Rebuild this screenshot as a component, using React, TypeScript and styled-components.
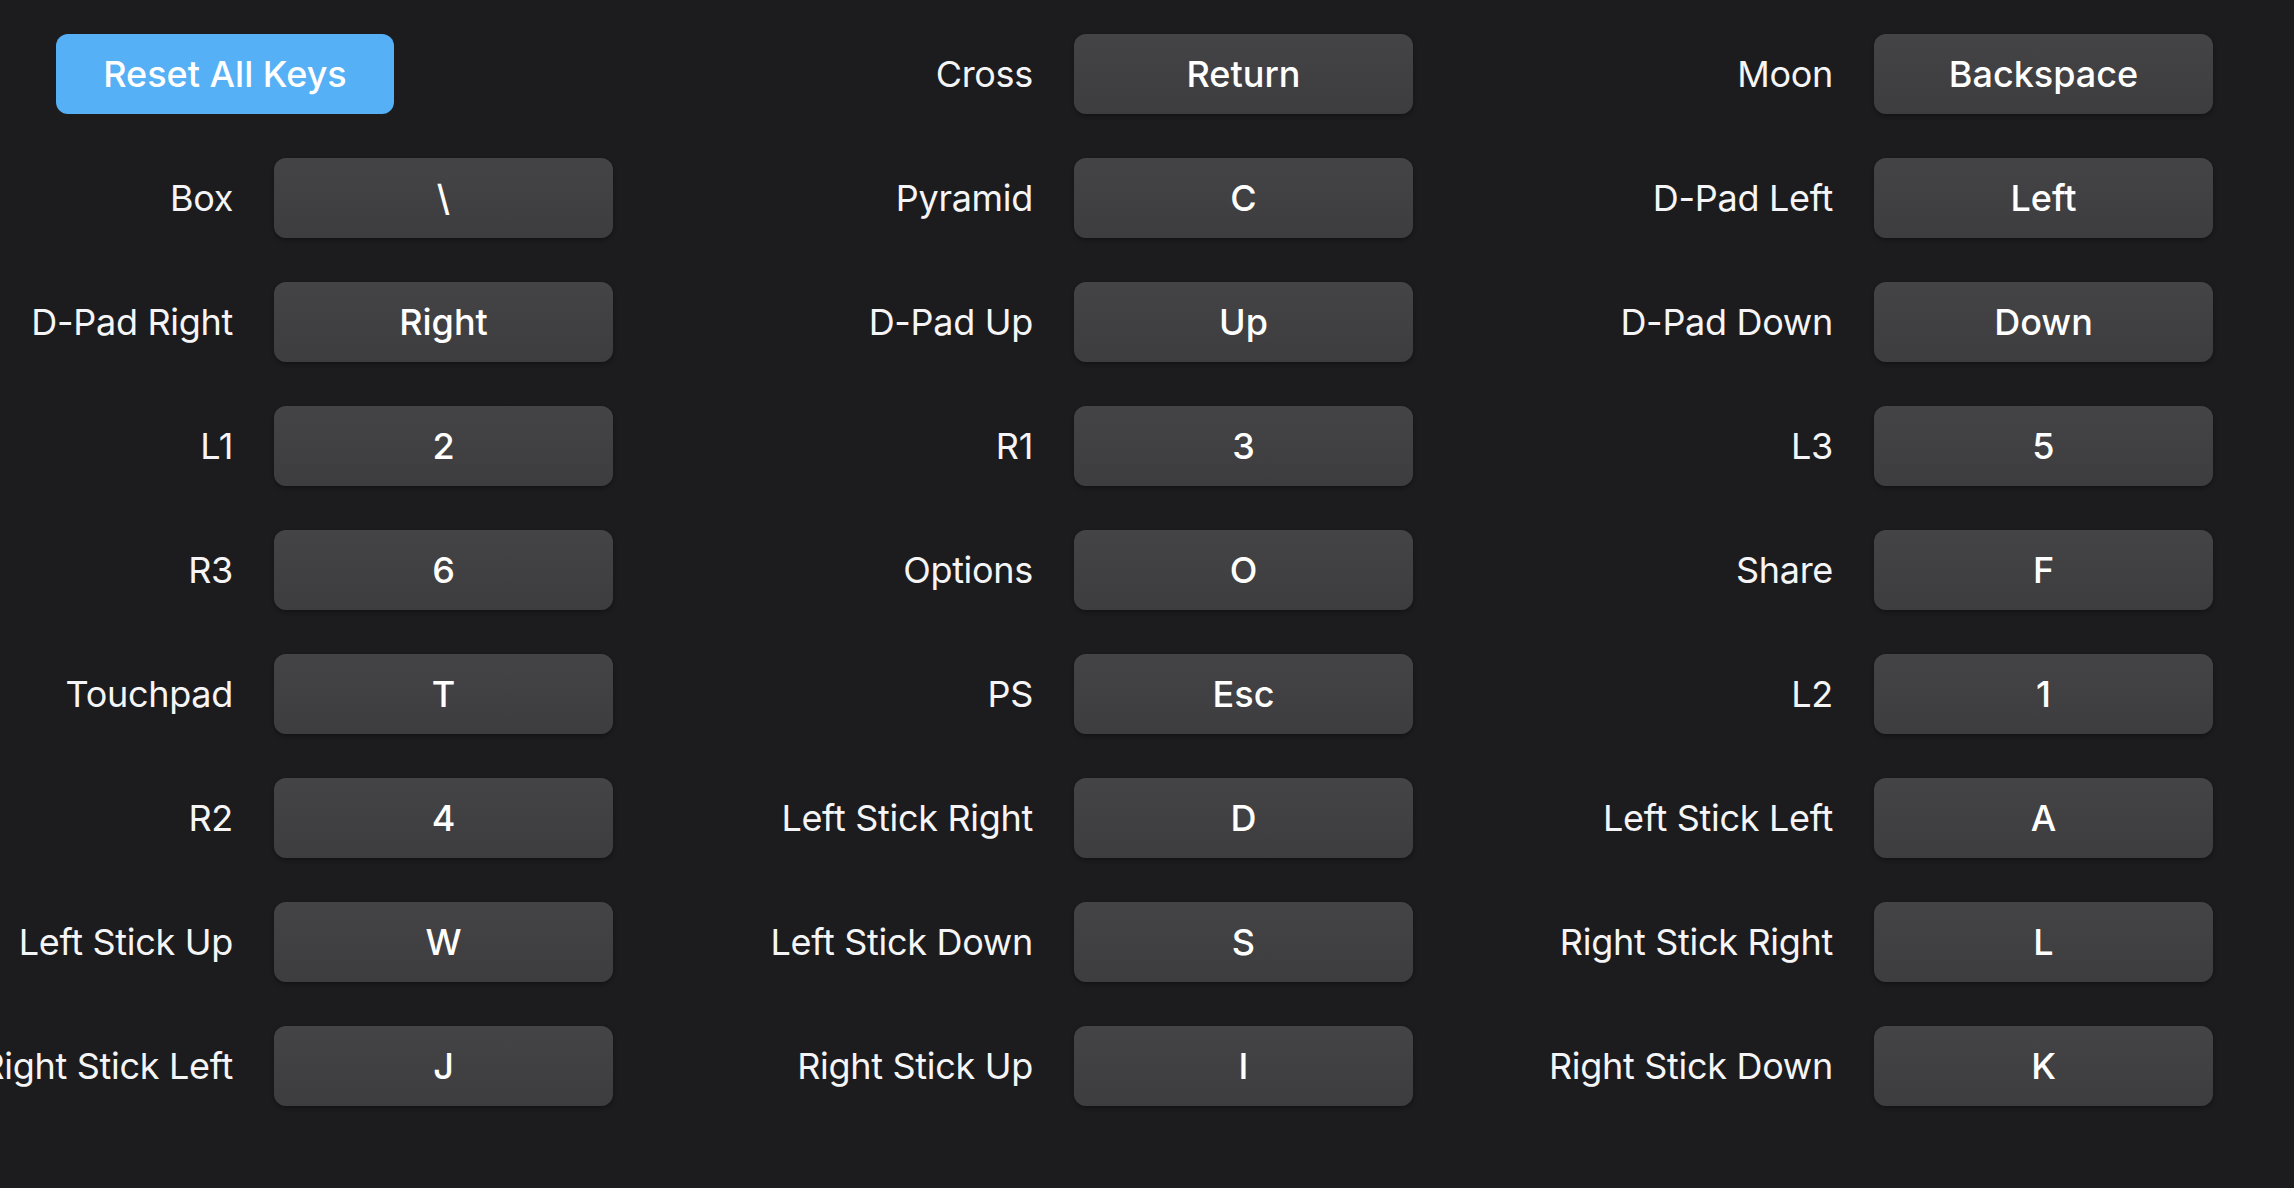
import React from "react"
import styled, { createGlobalStyle } from "styled-components"

const GlobalStyle = createGlobalStyle`
    html, body {
        margin: 0;
        padding: 0;
        background: #1c1c1e;
        overflow: hidden;
    }
    body {
        font-family: Inter, "Noto Sans", sans-serif;
        color: #fff;
    }
`

const Page = styled.div`
    box-sizing: border-box;
    width: 2294px;
    height: 1188px;
    padding: 34px 0 0 56px;
    background: #1c1c1e;
`

const Grid = styled.div`
    display: grid;
    grid-template-columns: repeat(3, 557px);
    grid-auto-rows: 80px;
    column-gap: 243px;
    row-gap: 44px;
`

const Cell = styled.div`
    display: flex;
    align-items: center;
    justify-content: flex-end;
    gap: 41px;
    min-width: 0;
`

const Label = styled.span`
    font-size: 36px;
    font-weight: 400;
    letter-spacing: -0.3px;
    white-space: nowrap;
    color: #f5f5f7;
`

const KeyButton = styled.button`
    flex: 0 0 339px;
    height: 80px;
    border: none;
    border-radius: 12px;
    background: linear-gradient(#444446, #3d3d3f);
    box-shadow: 0 2px 4px rgba(0, 0, 0, 0.35);
    color: #fff;
    font-family: Inter, "Noto Sans", sans-serif;
    font-size: 36px;
    font-weight: 500;
    letter-spacing: 0;
    cursor: pointer;
`

const ResetCell = styled.div`
    display: flex;
    align-items: center;
`

const ResetButton = styled.button`
    width: 338px;
    height: 80px;
    border: none;
    border-radius: 12px;
    background: #55b0f6;
    color: #fff;
    font-family: Inter, "Noto Sans", sans-serif;
    font-size: 36px;
    font-weight: 500;
    letter-spacing: 0;
    cursor: pointer;
`

const bindings: [string, string][] = [
    ["Cross", "Return"],
    ["Moon", "Backspace"],
    ["Box", "\\"],
    ["Pyramid", "C"],
    ["D-Pad Left", "Left"],
    ["D-Pad Right", "Right"],
    ["D-Pad Up", "Up"],
    ["D-Pad Down", "Down"],
    ["L1", "2"],
    ["R1", "3"],
    ["L3", "5"],
    ["R3", "6"],
    ["Options", "O"],
    ["Share", "F"],
    ["Touchpad", "T"],
    ["PS", "Esc"],
    ["L2", "1"],
    ["R2", "4"],
    ["Left Stick Right", "D"],
    ["Left Stick Left", "A"],
    ["Left Stick Up", "W"],
    ["Left Stick Down", "S"],
    ["Right Stick Right", "L"],
    ["Right Stick Left", "J"],
    ["Right Stick Up", "I"],
    ["Right Stick Down", "K"],
]

export default function App() {
    return (
        <>
            <GlobalStyle />
            <Page>
                <Grid>
                    <ResetCell>
                        <ResetButton>Reset All Keys</ResetButton>
                    </ResetCell>
                    {bindings.map(([name, key]) => (
                        <Cell key={name}>
                            <Label>{name}</Label>
                            <KeyButton>{key}</KeyButton>
                        </Cell>
                    ))}
                </Grid>
            </Page>
        </>
    )
}
